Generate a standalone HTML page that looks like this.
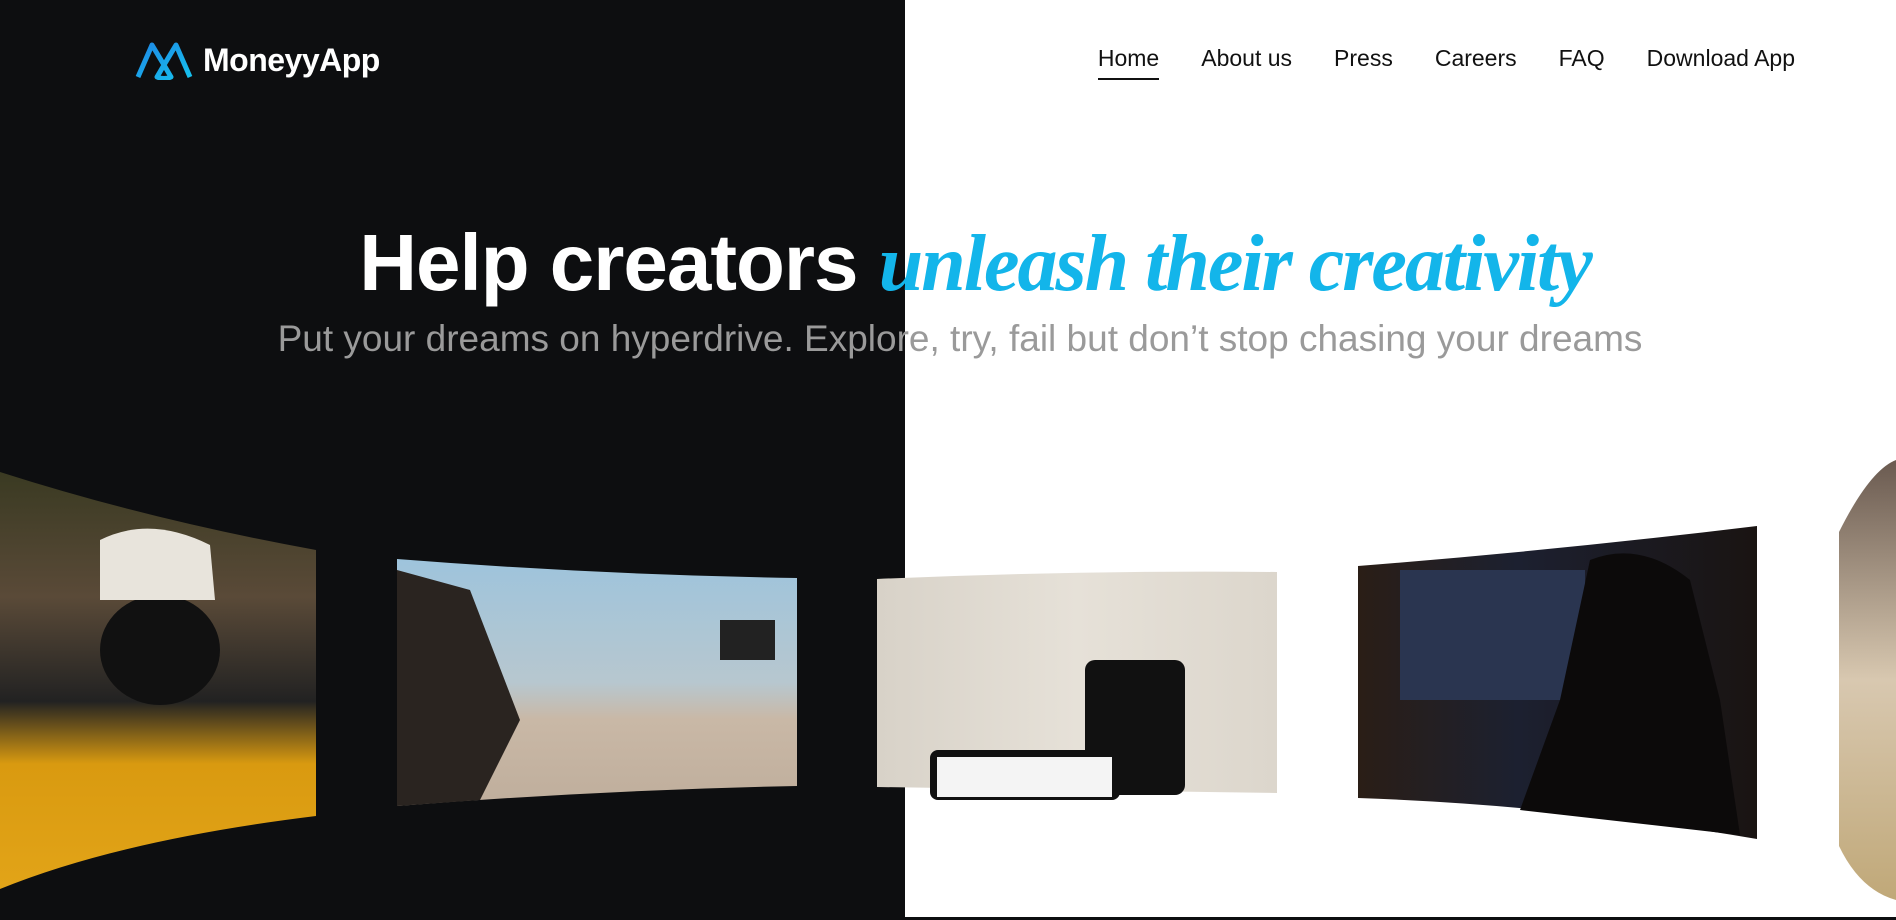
<!DOCTYPE html>
<html><head><meta charset="utf-8"><style>
*{margin:0;padding:0;box-sizing:border-box}
body{width:1896px;height:920px;overflow:hidden;position:relative;background:#fff;font-family:"Liberation Sans",sans-serif}
.dark{position:absolute;left:0;top:0;width:905px;height:920px;background:#0d0e10}
.logo{position:absolute;left:135px;top:40px;display:flex;align-items:center;color:#fff;font-size:32px;font-weight:bold;letter-spacing:-0.5px}
.logo svg{margin-right:8px}
nav{position:absolute;top:45px;right:101px;display:flex;gap:0}
nav a{color:#111;text-decoration:none;font-size:23px;margin-left:42px;padding-bottom:6px}
nav a.on{border-bottom:2px solid #111}
h1{position:absolute;top:217px;left:0;width:1950px;text-align:center;font-size:80px;font-weight:bold;color:#fff;white-space:nowrap;letter-spacing:-1px}
h1 span{color:#13b5ea;font-family:"Liberation Serif",serif;font-style:italic;font-size:80px;letter-spacing:-2px}
p.sub{position:absolute;top:318px;left:0;width:1920px;text-align:center;font-size:37px;color:#9a9a9a;white-space:nowrap}
svg.pics{position:absolute;left:0;top:0}
.line{position:absolute;left:905px;right:0;bottom:0;height:3px;background:#0d0e10}
</style></head><body>
<div class="dark"></div>
<div class="logo"><svg width="60" height="40" viewBox="0 0 60 40"><defs><linearGradient id="lg" x1="0" y1="0" x2="1" y2="1"><stop offset="0" stop-color="#1e88e5"/><stop offset="1" stop-color="#16c2ee"/></linearGradient></defs><path d="M3 37 L17 5 L29 25 L41 5 L55 37 M29 25 L22 37 Q29 40 36 37 Z" fill="none" stroke="url(#lg)" stroke-width="5" stroke-linejoin="round"/></svg>MoneyyApp</div>
<nav><a class="on">Home</a><a>About us</a><a>Press</a><a>Careers</a><a>FAQ</a><a>Download App</a></nav>
<h1>Help creators <span>unleash their creativity</span></h1>
<p class="sub">Put your dreams on hyperdrive. Explore, try, fail but don’t stop chasing your dreams</p>
<svg class="pics" width="1896" height="920" viewBox="0 0 1896 920">
<defs>
<linearGradient id="g1" x1="0" y1="0" x2="0" y2="1"><stop offset="0" stop-color="#3a3a22"/><stop offset=".3" stop-color="#5a4a38"/><stop offset=".55" stop-color="#222"/><stop offset=".7" stop-color="#d99a10"/><stop offset="1" stop-color="#e2a418"/></linearGradient>
<linearGradient id="g2" x1="0" y1="0" x2="0" y2="1"><stop offset="0" stop-color="#9ec4dc"/><stop offset=".5" stop-color="#b7c7cf"/><stop offset=".65" stop-color="#c9b8a6"/><stop offset="1" stop-color="#bfae9c"/></linearGradient>
<linearGradient id="g3" x1="0" y1="0" x2="1" y2="0"><stop offset="0" stop-color="#d8d2c8"/><stop offset=".5" stop-color="#e6e1d8"/><stop offset="1" stop-color="#dcd6cc"/></linearGradient>
<linearGradient id="g4" x1="0" y1="0" x2="1" y2="0"><stop offset="0" stop-color="#2a1e16"/><stop offset=".4" stop-color="#1c2030"/><stop offset="1" stop-color="#1a1412"/></linearGradient>
<linearGradient id="g5" x1="0" y1="0" x2="0" y2="1"><stop offset="0" stop-color="#6a5a50"/><stop offset=".5" stop-color="#d8c8b0"/><stop offset="1" stop-color="#c0a878"/></linearGradient>
</defs>
<path d="M0 472 Q150 520 316 550 L316 816 Q120 840 0 889 Z" fill="url(#g1)"/>
<ellipse cx="160" cy="650" rx="60" ry="55" fill="#111"/>
<path d="M100 540 Q150 515 210 545 L215 600 L100 600 Z" fill="#e8e4dc"/>
<path d="M397 559 Q600 575 797 578 L797 786 Q600 790 397 806 Z" fill="url(#g2)"/>
<path d="M397 570 L470 590 L520 720 L480 800 L397 806 Z" fill="#2a2420"/>
<rect x="720" y="620" width="55" height="40" fill="#222"/>
<path d="M877 579 Q1080 570 1277 572 L1277 793 Q1080 790 877 787 Z" fill="url(#g3)"/>
<rect x="1085" y="660" width="100" height="135" rx="10" fill="#111"/>
<rect x="930" y="750" width="190" height="50" rx="8" fill="#111"/>
<rect x="937" y="757" width="175" height="40" fill="#f4f4f4"/>
<path d="M1358 566 Q1560 550 1757 526 L1757 839 Q1560 805 1358 798 Z" fill="url(#g4)"/>
<rect x="1400" y="570" width="185" height="130" fill="#2a3550"/>
<path d="M1590 560 Q1640 540 1690 580 L1720 700 L1740 835 L1520 810 L1560 700 Z" fill="#0c0a0a"/>
<path d="M1839 532 Q1870 470 1896 460 L1896 900 Q1860 890 1839 846 Z" fill="url(#g5)"/>
</svg>
<div class="line"></div>
</body></html>
